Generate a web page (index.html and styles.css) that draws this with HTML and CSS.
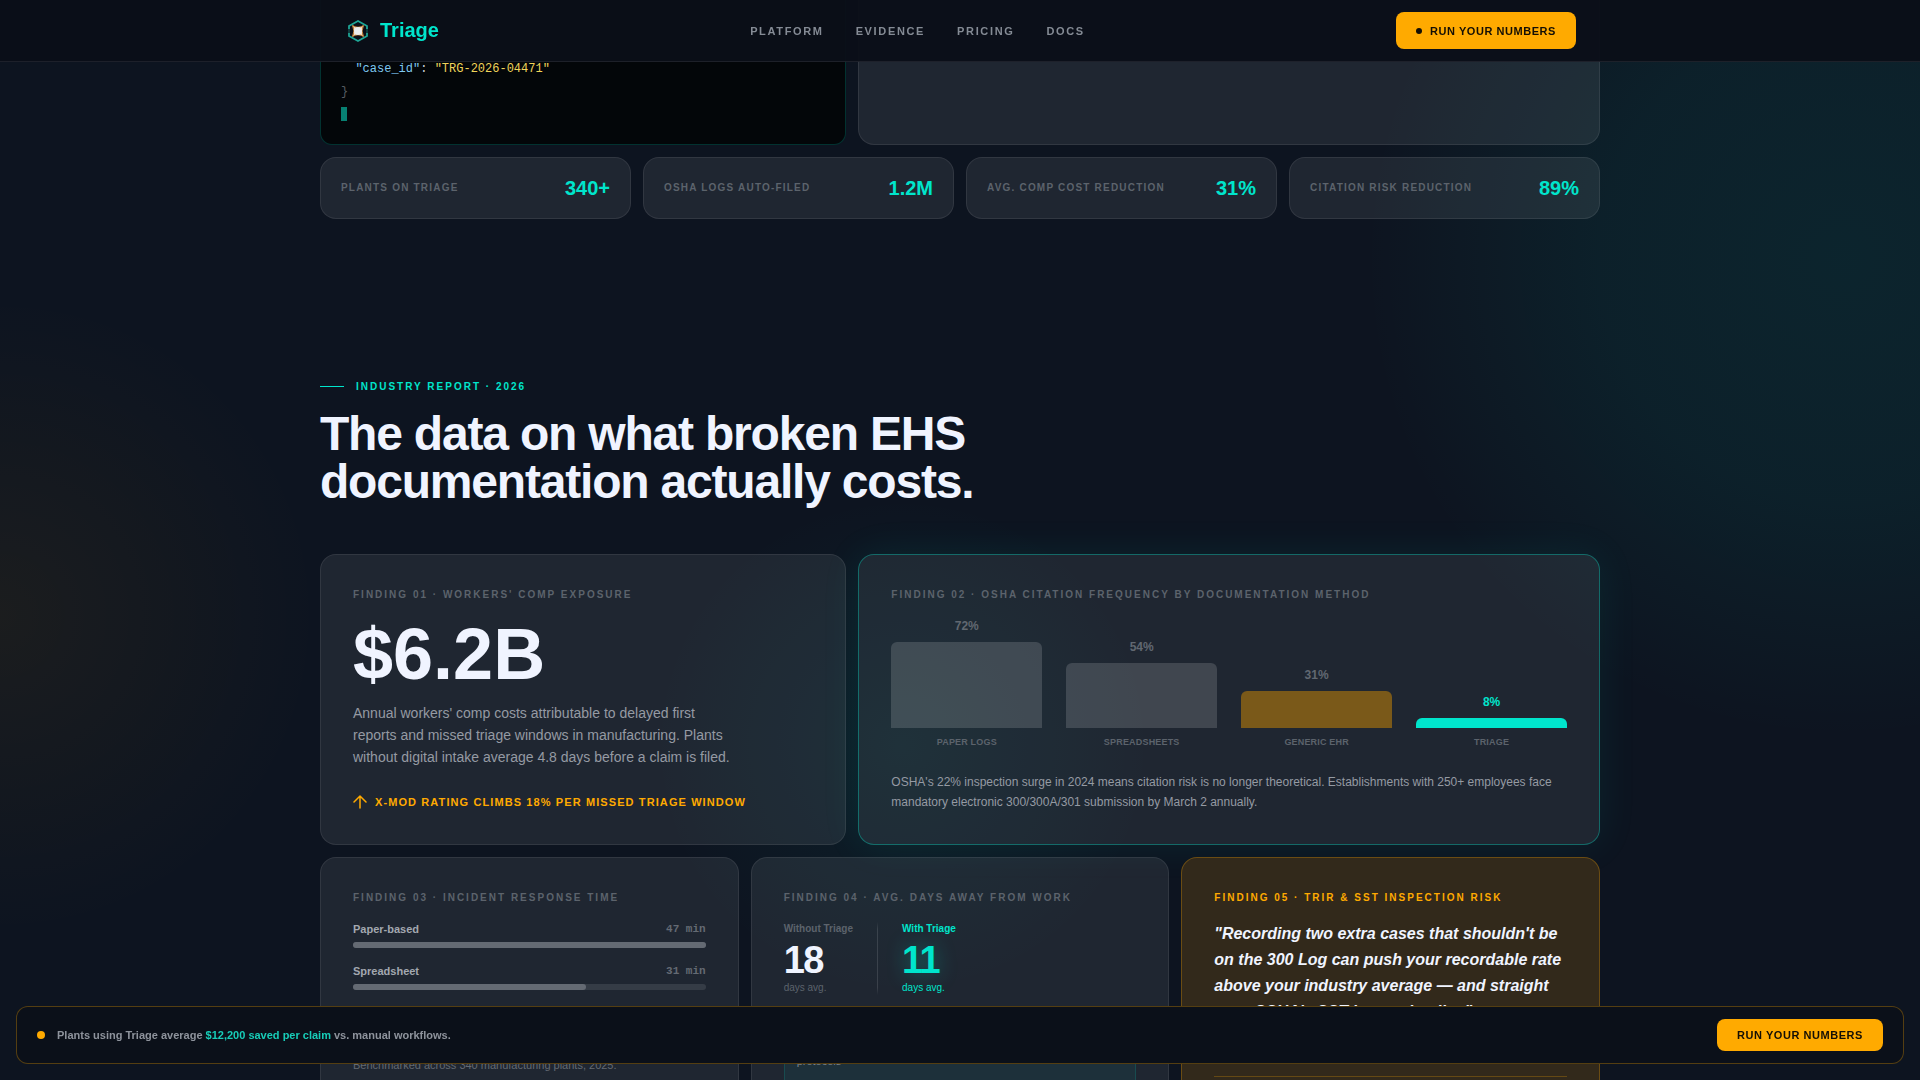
FILE: index.html
```html
<!DOCTYPE html>
<html lang="en">
<head>
    <meta charset="UTF-8">
    <meta name="viewport" content="width=device-width, initial-scale=1.0">
    <title>Triage</title>
    <link rel="stylesheet" href="styles.css">
</head>
<body>
    <header class="nav">
        <div class="nav-inner">
            <a class="logo" href="#">
                <svg width="28" height="28" viewBox="0 0 28 28" fill="none" aria-hidden="true">
                    <path d="M5 12V9l9-5 9 5v3M5 16v3l9 5 9-5v-3" stroke="#1ea595" stroke-width="1.8"/>
                    <path d="M5 12v4M23 12v4" stroke="#12504f" stroke-width="1.4"/>
                    <path d="M8.500 8.500q5.500 3.500 11 0-3 5.500 0 11-5.500-3.500-11 0 3-5.500 0-11z" fill="#f3dcc0" stroke="#c9853a" stroke-width="1"/>
                    <circle cx="14" cy="14" r="4" fill="#e9ecec"/>
                </svg>
                <span>Triage</span>
            </a>
            <nav class="nav-links">
                <a href="#platform">Platform</a>
                <a href="#evidence">Evidence</a>
                <a href="#pricing">Pricing</a>
                <a href="#docs">Docs</a>
            </nav>
            <button class="btn btn-nav" type="button"><span class="btn-dot"></span>Run your numbers</button>
        </div>
    </header>

    <main class="container">
        <section class="grid hero" id="platform">
            <div class="terminal col-5">
<pre><span class="key">  "case_id"</span>: <span class="str">"TRG-2026-04471"</span>
<span class="brace">}</span></pre>
                <span class="cursor"></span>
            </div>
            <div class="card hero-card col-7"></div>

            <div class="card stat col-3"><span class="stat-label">Plants on Triage</span><strong>340+</strong></div>
            <div class="card stat col-3"><span class="stat-label">OSHA logs auto-filed</span><strong>1.2M</strong></div>
            <div class="card stat col-3"><span class="stat-label">Avg. comp cost reduction</span><strong>31%</strong></div>
            <div class="card stat col-3"><span class="stat-label">Citation risk reduction</span><strong>89%</strong></div>
        </section>

        <section class="report" id="evidence">
            <p class="eyebrow">Industry Report · 2026</p>
            <h2>The data on what broken EHS<br>documentation actually costs.</h2>

            <div class="grid">
                <article class="card finding col-5">
                    <h3 class="label">Finding 01 · Workers' comp exposure</h3>
                    <p class="big-number">$6.2B</p>
                    <p class="lead">Annual workers' comp costs attributable to delayed first reports and missed triage windows in manufacturing. Plants without digital intake average 4.8 days before a claim is filed.</p>
                    <p class="warning">
                        <svg width="14" height="14" viewBox="0 0 14 14" fill="none" stroke="currentColor" stroke-width="1.5" stroke-linecap="round" stroke-linejoin="round" aria-hidden="true">
                            <path d="M7 13V1M1 7l6-6 6 6"/>
                        </svg>
                        X-mod rating climbs 18% per missed triage window
                    </p>
                </article>

                <article class="card finding teal col-7">
                    <h3 class="label">Finding 02 · OSHA citation frequency by documentation method</h3>
                    <div class="chart">
                        <div class="bar-col">
                            <span class="bar-value">72%</span>
                            <div class="bar" style="height: 86px"></div>
                            <span class="bar-name">Paper logs</span>
                        </div>
                        <div class="bar-col">
                            <span class="bar-value">54%</span>
                            <div class="bar" style="height: 65px"></div>
                            <span class="bar-name">Spreadsheets</span>
                        </div>
                        <div class="bar-col">
                            <span class="bar-value">31%</span>
                            <div class="bar bar-amber" style="height: 37px"></div>
                            <span class="bar-name">Generic EHR</span>
                        </div>
                        <div class="bar-col">
                            <span class="bar-value bright">8%</span>
                            <div class="bar bar-teal" style="height: 10px"></div>
                            <span class="bar-name">Triage</span>
                        </div>
                    </div>
                    <p class="body-text">OSHA's 22% inspection surge in 2024 means citation risk is no longer theoretical. Establishments with 250+ employees face mandatory electronic 300/300A/301 submission by March 2 annually.</p>
                </article>

                <article class="card finding col-4">
                    <h3 class="label">Finding 03 · Incident response time</h3>
                    <div class="times">
                        <div class="time-row">
                            <span>Paper-based</span><span class="mins">47 min</span>
                        </div>
                        <div class="track"><div class="fill" style="width: 100%"></div></div>
                        <div class="time-row">
                            <span>Spreadsheet</span><span class="mins">31 min</span>
                        </div>
                        <div class="track"><div class="fill" style="width: 66%"></div></div>
                    </div>
                    <p class="note">Benchmarked across 340 manufacturing plants, 2025.</p>
                </article>

                <article class="card finding col-4">
                    <h3 class="label">Finding 04 · Avg. days away from work</h3>
                    <div class="compare">
                        <div class="days">
                            <span class="days-name">Without Triage</span>
                            <strong>18</strong>
                            <span>days avg.</span>
                        </div>
                        <div class="divider"></div>
                        <div class="days days-teal">
                            <span class="days-name">With Triage</span>
                            <strong>11</strong>
                            <span>days avg.</span>
                        </div>
                    </div>
                    <div class="callout">protocols</div>
                </article>

                <article class="card finding amber col-4">
                    <h3 class="label">Finding 05 · TRIR &amp; SST inspection risk</h3>
                    <blockquote>"Recording two extra cases that shouldn't be on the 300 Log can push your recordable rate above your industry average — and straight onto OSHA's SST inspection list."</blockquote>
                    <hr>
                </article>
            </div>
        </section>
    </main>

    <aside class="sticky-bar">
        <span class="sticky-dot"></span>
        <p>Plants using Triage average <b>$12,200 saved per claim</b> vs. manual workflows.</p>
        <button class="btn btn-bar" type="button">Run your numbers</button>
    </aside>
</body>
</html>
```

FILE: styles.css
```css
:root {
    --bg: #0d1420;
    --teal: #00e5cc;
    --amber: #ffaa00;
    --white: #f0f4ff;
    --muted: #959aa3;
    --dim: #5c636c;
    --line: rgba(255, 255, 255, 0.08);
}

* {
    box-sizing: border-box;
    margin: 0;
    padding: 0;
}

html {
    background: var(--bg);
}

body {
    font-family: "Liberation Sans", Arial, sans-serif;
    color: var(--white);
    height: 100vh;
    overflow: hidden;
    background:
        radial-gradient(circle 480px at 96% 24%, rgba(0, 229, 204, 0.08), rgba(0, 229, 204, 0.06) 50%, transparent),
        radial-gradient(ellipse 320px 320px at 0% 57%, rgba(255, 170, 0, 0.06), transparent),
        radial-gradient(circle 250px at 47% 69%, rgba(0, 229, 204, 0.06), transparent),
        var(--bg);
}

a {
    color: inherit;
    text-decoration: none;
}

/* nav */
.nav {
    position: fixed;
    top: 0;
    left: 0;
    right: 0;
    z-index: 10;
    background: rgba(10, 15, 24, 0.96);
    border-bottom: 1px solid var(--line);
}

.nav-inner {
    max-width: 1280px;
    margin: 0 auto;
    padding: 12px 24px;
    display: flex;
    align-items: center;
    justify-content: space-between;
}

.logo {
    display: flex;
    align-items: center;
    gap: 8px;
    font-size: 20px;
    font-weight: 700;
    color: var(--teal);
}

.nav-links {
    display: flex;
    gap: 32px;
    font-size: 11px;
    font-weight: 700;
    letter-spacing: 0.15em;
    text-transform: uppercase;
    color: #858b95;
}

.btn {
    display: flex;
    align-items: center;
    gap: 8px;
    height: 32px;
    padding: 0 20px;
    border: none;
    border-radius: 8px;
    background: var(--amber);
    color: #140f05;
    font-family: inherit;
    font-size: 11px;
    font-weight: 700;
    letter-spacing: 0.05em;
    text-transform: uppercase;
    cursor: pointer;
}

.btn-nav {
    height: 37px;
}

.btn-dot {
    width: 6px;
    height: 6px;
    border-radius: 50%;
    background: #140f05;
}

/* layout */
.container {
    max-width: 1280px;
    margin: 0 auto;
}

.grid {
    display: grid;
    grid-template-columns: repeat(12, 1fr);
    gap: 12px;
}

.col-3 { grid-column: span 3; }
.col-4 { grid-column: span 4; }
.col-5 { grid-column: span 5; }
.col-7 { grid-column: span 7; }

.card {
    background: rgba(255, 255, 255, 0.08);
    border: 1px solid var(--line);
    border-radius: 16px;
}

/* hero */
.terminal {
    padding: 58px 20px 23px;
    background: #030609;
    border: 1px solid rgba(0, 229, 204, 0.2);
    border-top: none;
    border-radius: 0 0 12px 12px;
}

.terminal pre {
    font-family: "Liberation Mono", monospace;
    font-size: 12px;
    line-height: 23px;
    color: #c9d1d9;
}

.key { color: #7ec8f0; }
.str { color: #f0d45a; }
.brace { color: #565c63; }

.cursor {
    display: block;
    width: 6px;
    height: 14px;
    margin-top: 3px;
    background: #078072;
}

.hero-card {
    border-top: none;
    border-radius: 0 0 16px 16px;
}

.stat {
    height: 62px;
    padding: 0 20px;
    display: flex;
    align-items: center;
    justify-content: space-between;
}

.stat-label {
    font-size: 10px;
    line-height: 12px;
    font-weight: 700;
    letter-spacing: 0.12em;
    text-transform: uppercase;
    color: var(--dim);
}

.stat strong {
    font-size: 20px;
    color: var(--teal);
}

/* report */
.report {
    padding-top: 162px;
}

.eyebrow {
    display: flex;
    align-items: center;
    gap: 12px;
    font-size: 10px;
    line-height: 11px;
    font-weight: 700;
    letter-spacing: 0.2em;
    text-transform: uppercase;
    color: var(--teal);
}

.eyebrow::before {
    content: "";
    width: 24px;
    height: 1px;
    background: var(--teal);
}

.report h2 {
    margin: 18px 0 48px;
    font-size: 48px;
    line-height: 48px;
    letter-spacing: -0.025em;
}

.finding {
    padding: 32px;
}

.teal {
    border-color: rgba(0, 229, 204, 0.35);
    box-shadow: 0 0 40px rgba(0, 229, 204, 0.08);
}

.amber {
    background: #32291b;
    border-color: rgba(255, 170, 0, 0.28);
}

.label {
    margin-bottom: 15px;
    font-size: 10px;
    line-height: 16px;
    letter-spacing: 0.2em;
    text-transform: uppercase;
    color: var(--dim);
}

.amber .label {
    color: var(--amber);
}

.big-number {
    margin-bottom: 12px;
    font-size: 72px;
    line-height: 72px;
    font-weight: 700;
}

.lead {
    max-width: 380px;
    font-size: 14px;
    line-height: 22px;
    color: var(--muted);
}

.warning {
    margin-top: 27px;
    display: flex;
    align-items: center;
    gap: 8px;
    font-size: 11px;
    line-height: 12px;
    font-weight: 700;
    letter-spacing: 0.1em;
    text-transform: uppercase;
    color: var(--amber);
}

/* finding 02 */
.chart {
    display: flex;
    align-items: flex-end;
    gap: 24px;
    padding-top: 1px;
    margin-bottom: 24px;
}

.bar-col {
    flex: 1;
    display: flex;
    flex-direction: column;
    text-align: center;
}

.bar-value {
    margin-bottom: 9px;
    font-size: 12px;
    line-height: 14px;
    font-weight: 700;
    color: #616871;
}

.bar-value.bright {
    color: var(--teal);
}

.bar {
    border-radius: 6px 6px 0 0;
    background: rgba(255, 255, 255, 0.15);
}

.bar-amber { background: #7a5919; }
.bar-teal { background: var(--teal); }

.bar-name {
    margin-top: 8px;
    font-size: 9px;
    line-height: 12px;
    font-weight: 700;
    letter-spacing: 0.02em;
    text-transform: uppercase;
    color: var(--dim);
}

.body-text {
    font-size: 12px;
    line-height: 20px;
    color: var(--muted);
}

/* finding 03 */
.times {
    padding-top: 1px;
}

.time-row {
    display: flex;
    justify-content: space-between;
    margin-bottom: 6px;
    font-size: 11px;
    line-height: 14px;
    font-weight: 700;
    color: #a3a8b0;
}

.mins {
    font-family: "Liberation Mono", monospace;
    color: #646a73;
}

.track {
    height: 6px;
    margin-bottom: 16px;
    border-radius: 3px;
    background: rgba(255, 255, 255, 0.1);
}

.fill {
    height: 100%;
    border-radius: 3px;
    background: #646a73;
}

.note {
    margin-top: 68px;
    font-size: 11px;
    line-height: 14px;
    color: #646a73;
}

/* finding 04 */
.compare {
    display: flex;
    gap: 24px;
    padding-top: 1px;
}

.divider {
    width: 1px;
    background: linear-gradient(transparent, rgba(255, 255, 255, 0.12) 10%, rgba(255, 255, 255, 0.12) 90%, transparent);
}

.days {
    display: flex;
    flex-direction: column;
    font-size: 10px;
    line-height: 14px;
    color: var(--dim);
}

.days-name {
    font-weight: 700;
}

.days strong {
    margin: 5px 0 2px;
    font-size: 38px;
    line-height: 38px;
    letter-spacing: -0.04em;
    color: var(--white);
}

.days-teal,
.days-teal strong {
    color: var(--teal);
}

.days-teal strong {
    text-shadow: 0 0 20px rgba(0, 229, 204, 0.4);
}

.callout {
    margin-top: 24px;
    padding: 34px 12px 24px;
    font-size: 11px;
    line-height: 14px;
    color: #7b828b;
    background: rgba(0, 229, 204, 0.06);
    border: 1px solid rgba(0, 229, 204, 0.15);
    border-radius: 8px;
}

/* finding 05 */
blockquote {
    font-size: 16px;
    line-height: 26px;
    font-weight: 700;
    font-style: italic;
}

.amber hr {
    margin-top: 51px;
    border: none;
    border-top: 1px solid rgba(255, 170, 0, 0.25);
}

/* sticky bar */
.sticky-bar {
    position: fixed;
    left: 16px;
    right: 16px;
    bottom: 16px;
    z-index: 10;
    display: flex;
    align-items: center;
    gap: 12px;
    padding: 12px 20px;
    background: rgb(11, 16, 25);
    border: 1px solid rgba(255, 170, 0, 0.3);
    border-radius: 12px;
    font-size: 11px;
    font-weight: 700;
    color: #8e939c;
}

.sticky-bar b {
    color: #17cdb8;
}

.sticky-dot {
    width: 8px;
    height: 8px;
    border-radius: 50%;
    background: var(--amber);
}

.btn-bar {
    margin-left: auto;
}
```
